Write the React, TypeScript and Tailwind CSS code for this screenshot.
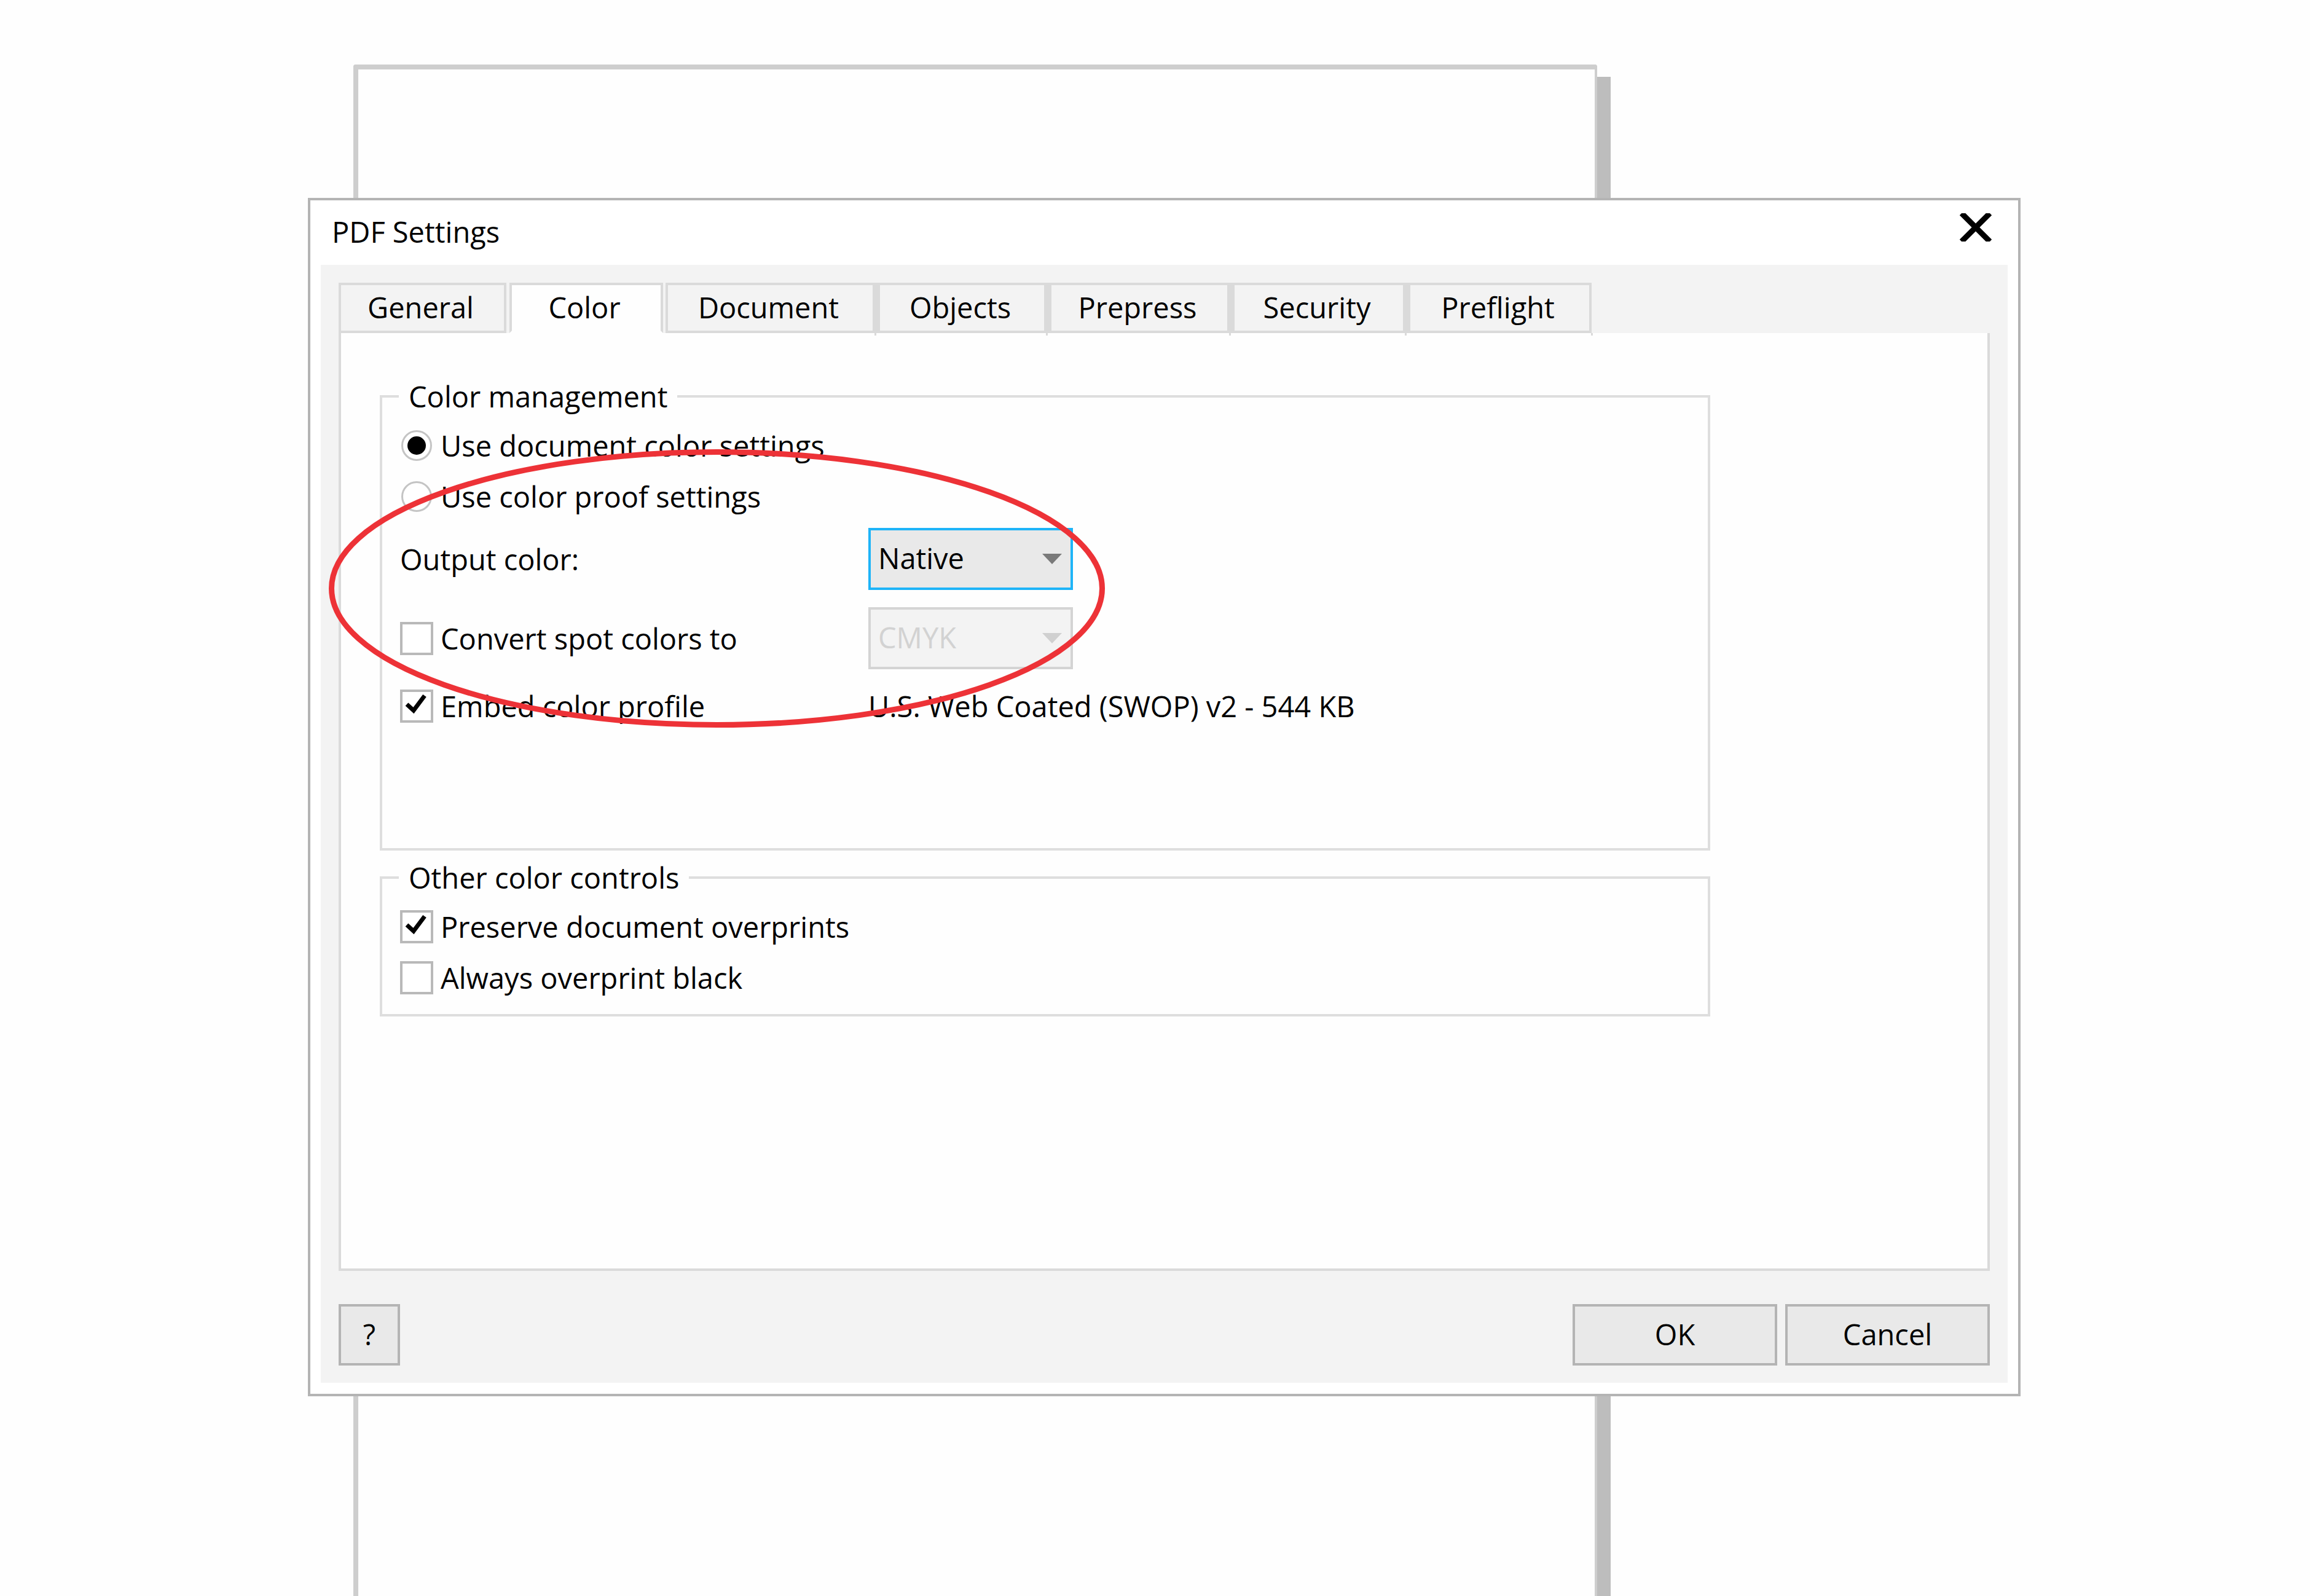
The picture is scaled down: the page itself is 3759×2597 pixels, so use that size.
import React, { useState } from 'react';

const tabs = [
    { name: 'General', className: 'w-[273px] mr-[5px] border-x-4' },
    { name: 'Color', className: 'w-[250px] mr-1 border-x-4' },
    { name: 'Document', className: 'w-[343px] border-l-4 border-r-[6px]', tick: true },
    { name: 'Objects', className: 'w-[279px] border-x-[6px]', tick: true },
    { name: 'Prepress', className: 'w-[298px] border-x-[6px]', tick: true },
    { name: 'Security', className: 'w-[286px] border-x-[6px]', tick: true },
    { name: 'Preflight', className: 'w-[301px] border-l-[6px] border-r-4', tick: true },
];

interface OptionProps {
    label: string;
    checked: boolean;
    onChange: () => void;
}

const CheckOption: React.FC<OptionProps> = ({ label, checked, onChange }) => (
    <label className="flex h-[83px] items-center gap-3">
        <span className="grid">
            <input
                type="checkbox"
                checked={checked}
                onChange={onChange}
                className="[grid-area:1/1] h-[54px] w-[54px] appearance-none border-4 border-[#b9b9b9] bg-white"
            />
            {checked && (
                <svg viewBox="0 0 54 54" className="[grid-area:1/1] pointer-events-none h-[54px] w-[54px]">
                    <path d="M11 24 L22 34 L40 10" fill="none" stroke="#000" strokeWidth="7" />
                </svg>
            )}
        </span>
        {label}
    </label>
);

const RadioOption: React.FC<OptionProps> = ({ label, checked, onChange }) => (
    <label className="flex h-[83px] items-center gap-3">
        <span className="grid w-[54px] place-items-center">
            <input
                type="radio"
                name="color-settings"
                checked={checked}
                onChange={onChange}
                className="[grid-area:1/1] h-[50px] w-[50px] appearance-none rounded-full border-[3px] border-[#c4c4c4] bg-white"
            />
            {checked && <span className="[grid-area:1/1] pointer-events-none h-[30px] w-[30px] rounded-full bg-black" />}
        </span>
        {label}
    </label>
);

interface DropdownProps {
    id: string;
    options: string[];
    disabled?: boolean;
    label?: string;
}

const Dropdown: React.FC<DropdownProps> = ({ id, options, disabled, label }) => (
    <div className="grid w-[333px] items-center">
        <select
            id={id}
            aria-label={label}
            disabled={disabled}
            className="[grid-area:1/1] h-[101px] w-full appearance-none border-4 border-[#1eb4f8] bg-[#e9e9e9] pl-3 pb-1 outline-none disabled:border-[#d4d4d4] disabled:bg-[#f3f3f3] disabled:text-[#d2d2d2] disabled:opacity-100"
        >
            {options.map((option) => (
                <option key={option}>{option}</option>
            ))}
        </select>
        <svg
            viewBox="0 0 32 17"
            className={`[grid-area:1/1] pointer-events-none mr-[18px] h-[17px] w-8 justify-self-end ${disabled ? 'fill-[#d0d0d0]' : 'fill-[#7a7a7a]'}`}
        >
            <path d="M0 0 H32 L16 17 Z" />
        </svg>
    </div>
);

const App: React.FC = () => {
    const [activeTab, setActiveTab] = useState('Color');
    const [source, setSource] = useState('document');
    const [convertSpot, setConvertSpot] = useState(false);
    const [embedProfile, setEmbedProfile] = useState(true);
    const [preserve, setPreserve] = useState(true);
    const [overprintBlack, setOverprintBlack] = useState(false);

    return (
        <div className="relative min-h-screen overflow-hidden bg-[#fefefe] pt-[322px] pr-[471px] pb-[325px] pl-[501px] font-['Open_Sans','Noto_Sans',sans-serif] text-[47px] leading-[60px] text-black">
            {/* Drawing page behind the dialog */}
            <div className="absolute top-[125px] bottom-0 left-[599px] w-[2022px] bg-[#bdbdbd]" />
            <div className="absolute top-[105px] bottom-0 left-[575px] w-[2024px] rounded-t-sm border-8 border-r-4 border-b-0 border-[#cecece] bg-[#fefefe]" />

            <section role="dialog" aria-labelledby="dialog-title" className="relative border-4 border-[#b4b4b4] bg-white px-[17px] pb-[18px]">
                <header className="flex h-[105px] items-start justify-between pt-[21px] pr-6 pl-[18px]">
                    <h1 id="dialog-title">PDF Settings</h1>
                    <button type="button" aria-label="Close">
                        <svg viewBox="0 0 56 46" className="h-[46px] w-14">
                            <path d="M5 0 L51 46 M51 0 L5 46" fill="none" stroke="#000" strokeWidth="9" />
                        </svg>
                    </button>
                </header>

                <div className="bg-[#f3f3f3] px-[29px] pt-[29px] pb-7">
                    <div role="tablist" className="flex">
                        {tabs.map((tab) => (
                            <button
                                key={tab.name}
                                type="button"
                                role="tab"
                                aria-selected={activeTab === tab.name}
                                onClick={() => setActiveTab(tab.name)}
                                className={`relative h-[82px] border-y-4 border-[#dadada] pr-1.5 pb-0.5 ${tab.className} ${activeTab === tab.name ? 'border-b-[#fefefe] bg-[#fefefe]' : 'bg-[#f3f3f3]'}`}
                            >
                                {tab.name}
                                {tab.tick && <span className="absolute -right-1.5 -bottom-2 h-1 w-[3px] bg-[#dadada]" />}
                            </button>
                        ))}
                    </div>

                    <div role="tabpanel" className="h-[1526px] border-4 border-t-0 border-[#dadada] bg-[#fefefe] pt-[73px] pr-[451px] pl-[63px]">
                        <fieldset className="border-4 border-[#dedede] pt-2 pr-4 pb-[190px] pl-[29px]">
                            <legend className="-ml-[2px] px-4">Color management</legend>
                            <RadioOption
                                label="Use document color settings"
                                checked={source === 'document'}
                                onChange={() => setSource('document')}
                            />
                            <RadioOption
                                label="Use color proof settings"
                                checked={source === 'proof'}
                                onChange={() => setSource('proof')}
                            />
                            <div className="mt-[10px] grid grid-cols-[762px_1fr] items-center">
                                <label htmlFor="output-color">Output color:</label>
                                <Dropdown id="output-color" options={['Native', 'RGB', 'CMYK', 'Grayscale']} />
                            </div>
                            <div className="mt-7 grid grid-cols-[762px_1fr] items-center">
                                <CheckOption
                                    label="Convert spot colors to"
                                    checked={convertSpot}
                                    onChange={() => setConvertSpot(!convertSpot)}
                                />
                                <Dropdown id="spot-color" label="Spot color mode" options={['CMYK', 'RGB', 'Grayscale']} disabled={!convertSpot} />
                            </div>
                            <div className="mt-[18px] grid grid-cols-[762px_1fr] items-center">
                                <CheckOption
                                    label="Embed color profile"
                                    checked={embedProfile}
                                    onChange={() => setEmbedProfile(!embedProfile)}
                                />
                                <span>U.S. Web Coated (SWOP) v2 - 544 KB</span>
                            </div>
                        </fieldset>

                        <fieldset className="mt-[14px] border-4 border-[#dedede] pt-2 pr-4 pb-[18px] pl-[29px]">
                            <legend className="-ml-[2px] px-4">Other color controls</legend>
                            <CheckOption
                                label="Preserve document overprints"
                                checked={preserve}
                                onChange={() => setPreserve(!preserve)}
                            />
                            <CheckOption
                                label="Always overprint black"
                                checked={overprintBlack}
                                onChange={() => setOverprintBlack(!overprintBlack)}
                            />
                        </fieldset>
                    </div>

                    <footer className="mt-[54px] flex gap-[13px]">
                        <button type="button" aria-label="Help" className="mr-auto h-[100px] w-[100px] border-4 border-[#b4b4b4] bg-[#e9e9e9] pb-0.5">?</button>
                        <button type="button" className="h-[100px] w-[333px] border-4 border-[#b4b4b4] bg-[#e9e9e9] pb-0.5">OK</button>
                        <button type="button" className="h-[100px] w-[333px] border-4 border-[#b4b4b4] bg-[#e9e9e9] pb-0.5">Cancel</button>
                    </footer>
                </div>
            </section>

            {/* Red callout around the output color options */}
            <svg viewBox="0 0 1263 453" className="pointer-events-none absolute top-[731px] left-[535px] h-[453px] w-[1263px]">
                <ellipse cx="631.5" cy="226.5" rx="627" ry="222" fill="none" stroke="#ed3237" strokeWidth="9" />
            </svg>
        </div>
    );
};

export default App;
